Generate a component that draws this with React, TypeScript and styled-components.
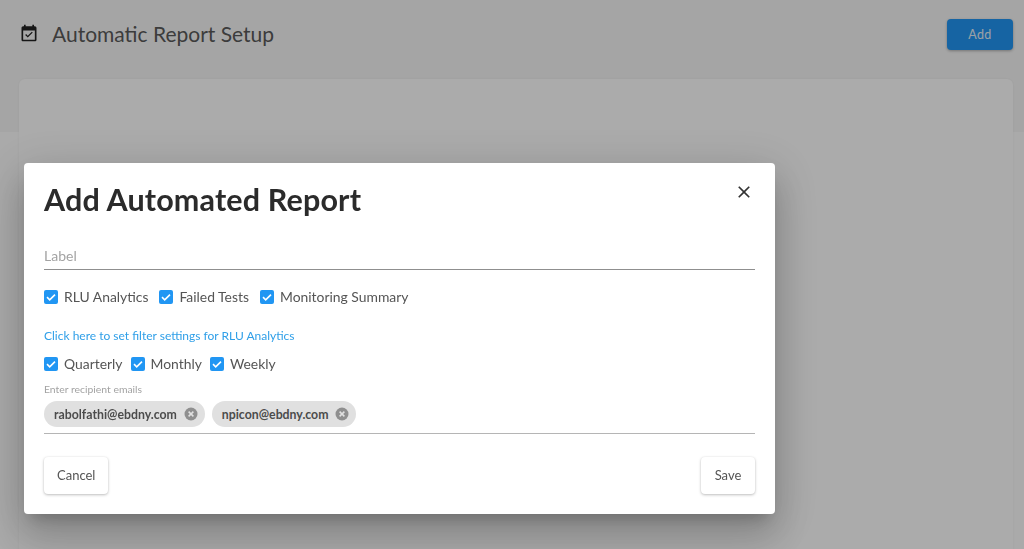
import React from "react";
import styled, { createGlobalStyle } from "styled-components";

const Global = createGlobalStyle`
  html, body { margin: 0; padding: 0; height: 100%; overflow: hidden; background: #fff; }
  * { box-sizing: border-box; }
  body { font-family: "Lato", "Liberation Sans", sans-serif; color: #333; }
`;
const Page = styled.div`
  height: 549px;
  overflow: hidden;
  background: linear-gradient(#f7f7f7 0, #f7f7f7 132px, #fefefe 132px);
  padding: 0 11px 0 19px;
`;
const Header = styled.header`
  height: 79px;
  display: flex;
  align-items: flex-start;
  justify-content: space-between;
`;
const TitleWrap = styled.div`
  display: flex;
  align-items: center;
  gap: 13px;
  padding: 18px 0 0 0;
  height: 48px;
`;
const PageTitle = styled.h1`
  margin: 0;
  font-size: 21px;
  font-weight: 400;
  color: #5a5a5a;
`;
const AddButton = styled.button`
  width: 66px;
  height: 31px;
  margin-top: 19px;
  padding: 0 0 1px;
  border: 0;
  border-radius: 4px;
  background: #2196f3;
  color: #e8f1f8;
  font: 400 12.5px "Lato", sans-serif;
  letter-spacing: 0.4px;
  box-shadow: 0 1px 3px rgba(0,0,0,.3);
`;
const Card = styled.section`
  height: 520px;
  width: 994px;
  background: #fff;
  border-radius: 6px;
  box-shadow: 0 0 3px rgba(0,0,0,.06);
`;
const Overlay = styled.div`
  position: fixed;
  inset: 0;
  background: rgba(0,0,0,.33);
`;
const Dialog = styled.div`
  position: absolute;
  left: 24px;
  top: 163px;
  width: 751px;
  height: 351px;
  background: #fff;
  border-radius: 4px;
  padding: 19px 20px 20px;
  display: flex;
  flex-direction: column;
  box-shadow: 0 11px 15px -7px rgba(0,0,0,.2), 0 24px 38px 3px rgba(0,0,0,.14), 0 9px 46px 8px rgba(0,0,0,.12);
`;
const DialogTitle = styled.h2`
  margin: 0;
  font-size: 30.5px;
  line-height: 34px;
  letter-spacing: 0.15px;
  font-weight: 700;
  color: #2b2b2b;
`;
const CloseButton = styled.button`
  position: absolute;
  right: 21px;
  top: 19px;
  width: 20px;
  height: 20px;
  padding: 0;
  border: 0;
  background: none;
  color: #333;
  display: flex;
`;
const LabelField = styled.div`
  margin-top: 29px;
  height: 25px;
  padding-top: 1px;
  border-bottom: 1px solid #8f8f8f;
  font-size: 14px;
  line-height: 20px;
  color: #a3a3a3;
`;
const CheckRow = styled.div<{ $top: number; $gap: number }>`
  display: flex;
  gap: ${(p) => p.$gap}px;
  margin-top: ${(p) => p.$top}px;
  height: 18px;
`;
const CheckItem = styled.label`
  display: flex;
  align-items: center;
  gap: 6px;
  font-size: 13.9px;
  color: #555;
`;
const Box = styled.span`
  width: 14px;
  height: 14px;
  margin-top: 2px;
  border-radius: 2px;
  background: #2196f3;
  display: flex;
`;
const FilterLink = styled.a`
  margin-top: 23px;
  font-size: 12px;
  line-height: 16px;
  color: #2f9fe8;
`;
const Hint = styled.div`
  margin-top: 11px;
  font-size: 10.4px;
  line-height: 12px;
  color: #a3a3a3;
`;
const Chips = styled.div`
  display: flex;
  gap: 7px;
  margin-top: 6px;
  padding-bottom: 6px;
  border-bottom: 1px solid #b5b5b5;
`;
const Chip = styled.div`
  height: 26px;
  border-radius: 13px;
  background: #e0e0e0;
  padding: 0 7px 0 10px;
  display: flex;
  align-items: center;
  gap: 7px;
  font-size: 12.3px;
  font-weight: 700;
  color: #4c4c4c;
`;
const Actions = styled.div`
  margin-top: auto;
  display: flex;
  justify-content: space-between;
`;
const ActionButton = styled.button`
  height: 37px;
  padding: 0 13px 1px;
  min-width: 54px;
  border: 0;
  border-radius: 4px;
  background: #fff;
  color: #555;
  font: 400 13px "Lato", sans-serif;
  box-shadow: 0 1px 3px rgba(0,0,0,.25), 0 0 2px rgba(0,0,0,.06);
`;

const Check = ({ label }: { label: string }) => (
  <CheckItem>
    <Box>
      <svg width="14" height="14" viewBox="0 0 14 14"><path d="M3 7.2l2.7 2.6L11 4.6" fill="none" stroke="#fff" strokeWidth="1.6" /></svg>
    </Box>
    {label}
  </CheckItem>
);
const ChipDelete = () => (
  <svg width="14" height="14" viewBox="0 0 14 14">
    <circle cx="7" cy="7" r="6.5" fill="#8f8f8f" />
    <path d="M4.6 4.6l4.8 4.8M9.4 4.6l-4.8 4.8" stroke="#e0e0e0" strokeWidth="1.5" />
  </svg>
);

export default function App() {
  return (
    <>
      <Global />
      <Page>
        <Header>
          <TitleWrap>
            <svg width="20" height="20" viewBox="0 0 24 24" fill="#222">
              <path d="M19 4h-1V2h-2v2H8V2H6v2H5C3.9 4 3 4.9 3 6v14c0 1.1.9 2 2 2h14c1.1 0 2-.9 2-2V6c0-1.1-.9-2-2-2zm0 16H5V9h14v11z" />
              <path d="M16.5 11.5l-1.1-1.1-4.9 4.9-2-2-1.1 1.1 3.1 3.1z" />
            </svg>
            <PageTitle>Automatic Report Setup</PageTitle>
          </TitleWrap>
          <AddButton>Add</AddButton>
        </Header>
        <Card />
      </Page>
      <Overlay>
        <Dialog>
          <DialogTitle>Add Automated Report</DialogTitle>
          <CloseButton aria-label="Close">
            <svg width="20" height="20" viewBox="0 0 24 24" fill="currentColor"><path d="M19 6.41L17.59 5 12 10.59 6.41 5 5 6.41 10.59 12 5 17.59 6.41 19 12 13.41 17.59 19 19 17.59 13.41 12z" /></svg>
          </CloseButton>
          <LabelField>Label</LabelField>
          <CheckRow $top={17} $gap={11}>
            <Check label="RLU Analytics" />
            <Check label="Failed Tests" />
            <Check label="Monitoring Summary" />
          </CheckRow>
          <FilterLink>Click here to set filter settings for RLU Analytics</FilterLink>
          <CheckRow $top={10} $gap={8}>
            <Check label="Quarterly" />
            <Check label="Monthly" />
            <Check label="Weekly" />
          </CheckRow>
          <Hint>Enter recipient emails</Hint>
          <Chips>
            <Chip>rabolfathi@ebdny.com<ChipDelete /></Chip>
            <Chip>npicon@ebdny.com<ChipDelete /></Chip>
          </Chips>
          <Actions>
            <ActionButton>Cancel</ActionButton>
            <ActionButton>Save</ActionButton>
          </Actions>
        </Dialog>
      </Overlay>
    </>
  );
}
